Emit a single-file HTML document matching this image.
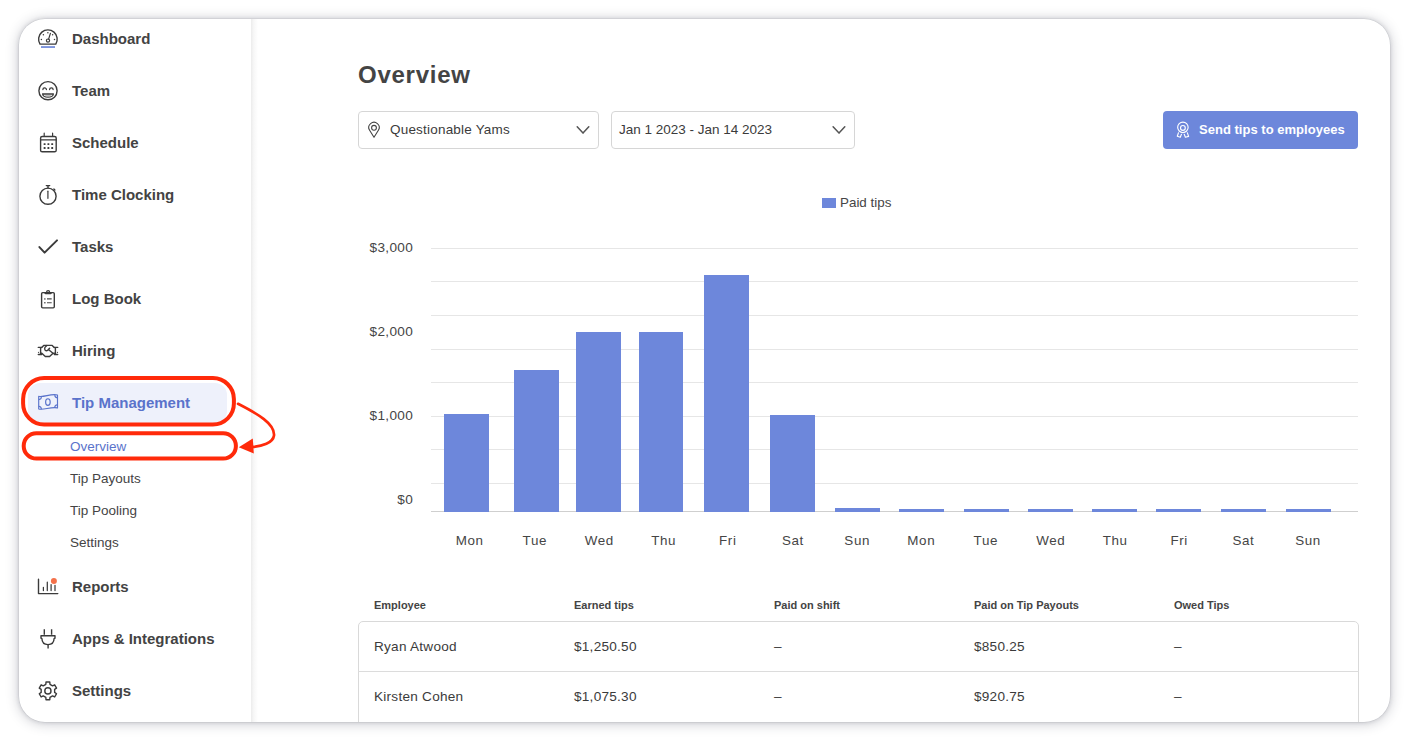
<!DOCTYPE html><html><head><meta charset="utf-8"><style>
*{box-sizing:border-box;margin:0;padding:0}
html,body{width:1409px;height:741px;overflow:hidden;background:#fff;font-family:"Liberation Sans",sans-serif;color:#3b3b3b}
#win{position:absolute;left:19px;top:19px;width:1371px;height:703px;border-radius:26px;overflow:hidden;background:#fff;
 box-shadow:0 0 0 0.5px rgba(60,64,80,0.10),0 0 4px rgba(40,44,64,0.14),0 1px 13px rgba(40,44,64,0.28)}
#page{position:absolute;left:-19px;top:-19px;width:1409px;height:741px}
.a{position:absolute;white-space:nowrap;line-height:20px;height:20px}
.nav{font-size:15px;font-weight:bold;color:#434343;left:72px}
.sub{font-size:13.5px;color:#444;left:70px}
.dd{position:absolute;top:111px;height:38px;border:1px solid #d6d6d6;border-radius:4px;background:#fff}
.yl{font-size:13.6px;color:#454545;width:60px;text-align:right;left:353px;letter-spacing:0.3px}
.xl{font-size:13.4px;color:#454545;width:60px;text-align:center;letter-spacing:0.6px;text-indent:0.6px}
.th{font-size:11px;font-weight:bold;color:#444}
.td{font-size:13.6px;color:#3b3b3b;letter-spacing:0.25px}
.bar{position:absolute;background:#6d87db}
.gl{position:absolute;left:431px;width:927px;height:1px;background:#e6e6e6}
</style></head><body><div id="win"><div id="page"><div style="position:absolute;left:251px;top:0;width:7px;height:741px;background:linear-gradient(to right,#ececec,#f7f7f7 40%,#fff)"></div>
<div style="position:absolute;left:28px;top:383px;width:199px;height:40px;border-radius:12px;background:#eef1fb"></div>
<div class="a nav" style="left:72px;top:29px;">Dashboard</div>
<div class="a nav" style="left:72px;top:81px;">Team</div>
<div class="a nav" style="left:72px;top:133px;">Schedule</div>
<div class="a nav" style="left:72px;top:185px;">Time Clocking</div>
<div class="a nav" style="left:72px;top:237px;">Tasks</div>
<div class="a nav" style="left:72px;top:289px;">Log Book</div>
<div class="a nav" style="left:72px;top:341px;">Hiring</div>
<div class="a nav" style="left:72px;top:393px;color:#5a73cb">Tip Management</div>
<div class="a nav" style="left:72px;top:577px;">Reports</div>
<div class="a nav" style="left:72px;top:629px;">Apps &amp; Integrations</div>
<div class="a nav" style="left:72px;top:681px;">Settings</div>
<div class="a sub" style="left:70px;top:437px;color:#5a73cb">Overview</div>
<div class="a sub" style="left:70px;top:469px;">Tip Payouts</div>
<div class="a sub" style="left:70px;top:501px;">Tip Pooling</div>
<div class="a sub" style="left:70px;top:533px;">Settings</div>
<div class="a " style="left:358px;top:65px;font-size:24px;font-weight:bold;color:#444;letter-spacing:0.75px">Overview</div>
<div class="dd" style="left:358px;width:241px"></div>
<div class="dd" style="left:611px;width:244px"></div>
<div class="a " style="left:390px;top:120px;font-size:13.5px;color:#3b3b3b;letter-spacing:0.2px">Questionable Yams</div>
<div class="a " style="left:619px;top:120px;font-size:13.5px;color:#3b3b3b;letter-spacing:0px">Jan 1 2023 - Jan 14 2023</div>
<div style="position:absolute;left:1163px;top:111px;width:195px;height:38px;border-radius:4px;background:#6d87db"></div>
<div class="a " style="left:1199px;top:120px;font-size:13px;font-weight:bold;color:#fff;letter-spacing:0.02px">Send tips to employees</div>
<div style="position:absolute;left:822px;top:198px;width:14px;height:10px;background:#6d87db"></div>
<div class="a " style="left:840px;top:193px;font-size:13.4px;color:#454545">Paid tips</div>
<div class="gl" style="top:248px"></div>
<div class="gl" style="top:281px"></div>
<div class="gl" style="top:315px"></div>
<div class="gl" style="top:349px"></div>
<div class="gl" style="top:382px"></div>
<div class="gl" style="top:416px"></div>
<div class="gl" style="top:449px"></div>
<div class="gl" style="top:483px"></div>
<div class="gl" style="top:511px;background:#cfcfcf"></div>
<div class="a yl" style="left:353px;top:238px;">$3,000</div>
<div class="a yl" style="left:353px;top:322px;">$2,000</div>
<div class="a yl" style="left:353px;top:406px;">$1,000</div>
<div class="a yl" style="left:353px;top:490px;">$0</div>
<div class="bar" style="left:444px;top:414px;width:45px;height:98px"></div>
<div class="bar" style="left:514px;top:370px;width:45px;height:142px"></div>
<div class="bar" style="left:576px;top:332px;width:45px;height:180px"></div>
<div class="bar" style="left:639px;top:332px;width:44px;height:180px"></div>
<div class="bar" style="left:704px;top:275px;width:45px;height:237px"></div>
<div class="bar" style="left:770px;top:415px;width:45px;height:97px"></div>
<div class="bar" style="left:835px;top:508px;width:45px;height:4px"></div>
<div class="bar" style="left:899px;top:509px;width:45px;height:3px"></div>
<div class="bar" style="left:964px;top:509px;width:45px;height:3px"></div>
<div class="bar" style="left:1028px;top:509px;width:45px;height:3px"></div>
<div class="bar" style="left:1092px;top:509px;width:45px;height:3px"></div>
<div class="bar" style="left:1156px;top:509px;width:45px;height:3px"></div>
<div class="bar" style="left:1221px;top:509px;width:45px;height:3px"></div>
<div class="bar" style="left:1286px;top:509px;width:45px;height:3px"></div>
<div class="a xl" style="left:439.3px;top:531px;">Mon</div>
<div class="a xl" style="left:504.5px;top:531px;">Tue</div>
<div class="a xl" style="left:568.9px;top:531px;">Wed</div>
<div class="a xl" style="left:633.3px;top:531px;">Thu</div>
<div class="a xl" style="left:697.5px;top:531px;">Fri</div>
<div class="a xl" style="left:762.6px;top:531px;">Sat</div>
<div class="a xl" style="left:826.9px;top:531px;">Sun</div>
<div class="a xl" style="left:891px;top:531px;">Mon</div>
<div class="a xl" style="left:955.5px;top:531px;">Tue</div>
<div class="a xl" style="left:1020.5px;top:531px;">Wed</div>
<div class="a xl" style="left:1084.9px;top:531px;">Thu</div>
<div class="a xl" style="left:1148.9px;top:531px;">Fri</div>
<div class="a xl" style="left:1213.1px;top:531px;">Sat</div>
<div class="a xl" style="left:1277.8px;top:531px;">Sun</div>
<div class="a th" style="left:374px;top:595px;">Employee</div>
<div class="a th" style="left:574px;top:595px;">Earned tips</div>
<div class="a th" style="left:774px;top:595px;">Paid on shift</div>
<div class="a th" style="left:974px;top:595px;">Paid on Tip Payouts</div>
<div class="a th" style="left:1174px;top:595px;">Owed Tips</div>
<div style="position:absolute;left:358px;top:621px;width:1001px;height:200px;border:1px solid #d9d9d9;border-radius:5px"></div>
<div style="position:absolute;left:358px;top:671px;width:1001px;height:1px;background:#dcdcdc"></div>
<div class="a td" style="left:374px;top:637px;">Ryan Atwood</div>
<div class="a td" style="left:574px;top:637px;">$1,250.50</div>
<div class="a td" style="left:774px;top:637px;">&ndash;</div>
<div class="a td" style="left:974px;top:637px;">$850.25</div>
<div class="a td" style="left:1174px;top:637px;">&ndash;</div>
<div class="a td" style="left:374px;top:687px;">Kirsten Cohen</div>
<div class="a td" style="left:574px;top:687px;">$1,075.30</div>
<div class="a td" style="left:774px;top:687px;">&ndash;</div>
<div class="a td" style="left:974px;top:687px;">$920.75</div>
<div class="a td" style="left:1174px;top:687px;">&ndash;</div><svg style="position:absolute;left:0;top:0" width="1409" height="741" viewBox="0 0 1409 741"><g fill="none" stroke="#3b3b3b" stroke-width="1.4" stroke-linecap="round" stroke-linejoin="round"><path d="M40 44.1 A9.3 9.3 0 1 1 55.8 44.1 Z"/><circle cx="48" cy="40.6" r="1.6" stroke-width="1.2"/><path d="M48.6 39.1 L50.4 33.4" stroke-width="1.2"/></g><g fill="#3b3b3b"><circle cx="41.4" cy="39.5" r="0.75"/><circle cx="43.4" cy="34.8" r="0.75"/><circle cx="47.9" cy="32.8" r="0.75"/><circle cx="52.6" cy="34.8" r="0.75"/><circle cx="54.5" cy="39.5" r="0.75"/></g><rect x="41" y="46.1" width="14" height="1.9" fill="#7c93dc"/><g fill="none" stroke="#3b3b3b" stroke-width="1.4" stroke-linecap="round" stroke-linejoin="round"><circle cx="48" cy="90.7" r="9.1"/><path d="M42.9 89.6 A1.75 1.75 0 0 1 46.4 89.6 M49.6 89.6 A1.75 1.75 0 0 1 53.1 89.6" stroke-width="1.3"/><path d="M42.6 94 L53.4 94 C53 96.4 50.6 97.2 48 97.2 C45.4 97.2 43 96.4 42.6 94 Z" stroke-width="1.3"/></g><path d="M44.6 95.3 L51.4 95.3 C50.8 96.1 49.5 96.4 48 96.4 C46.5 96.4 45.2 96.1 44.6 95.3 Z" fill="#aaa"/><g fill="none" stroke="#3b3b3b" stroke-width="1.4" stroke-linecap="round" stroke-linejoin="round"><rect x="40.6" y="136.5" width="15.6" height="15.3" rx="1.6"/><path d="M40.6 139.9 L56.2 139.9" stroke-width="1.2"/><path d="M44.2 133.2 L44.2 136.2 M52.6 133.2 L52.6 136.2" stroke-width="1.2"/></g><g fill="#3b3b3b"><rect x="43.65" y="143.15" width="1.9" height="1.9" rx="0.3"/><rect x="43.65" y="147.05" width="1.9" height="1.9" rx="0.3"/><rect x="47.449999999999996" y="143.15" width="1.9" height="1.9" rx="0.3"/><rect x="47.449999999999996" y="147.05" width="1.9" height="1.9" rx="0.3"/><rect x="51.25" y="143.15" width="1.9" height="1.9" rx="0.3"/><rect x="51.25" y="147.05" width="1.9" height="1.9" rx="0.3"/></g><g fill="none" stroke="#3b3b3b" stroke-width="1.4" stroke-linecap="round" stroke-linejoin="round"><circle cx="48" cy="196.2" r="8.1"/><path d="M46.3 185.6 L49.7 185.6 M48 185.8 L48 188" /><path d="M53.9 189.0 L54.9 190.0" stroke-width="1.3"/><path d="M47.9 191.3 L47.9 198.3" stroke-width="1.4" stroke="#555"/></g><path d="M39.4 247.1 L44.6 252.6 L57 240.4" fill="none" stroke="#3b3b3b" stroke-width="2" stroke-linecap="round" stroke-linejoin="round"/><g fill="none" stroke="#3b3b3b" stroke-width="1.4" stroke-linecap="round" stroke-linejoin="round"><rect x="41.6" y="292.6" width="12.7" height="15.3" rx="1.1"/><path d="M46.6 292.2 A1.5 1.5 0 0 1 49.6 292.2" stroke-width="1.3"/></g><path d="M44.4 292.4 L51.8 292.4 L51.8 293.2 Q51.6 294.2 50.6 294.2 L45.6 294.2 Q44.6 294.2 44.4 293.2 Z" fill="#3b3b3b"/><g fill="#3b3b3b"><rect x="44.2" y="298.3" width="1.3" height="1.3"/><rect x="44.2" y="302.1" width="1.3" height="1.3"/></g><g stroke="#4a4a4a" stroke-width="1.2"><path d="M47 298.95 L51.7 298.95 M47 302.75 L51.7 302.75"/></g><g fill="none" stroke="#3b3b3b" stroke-width="1.4" stroke-linecap="round" stroke-linejoin="round" stroke-width="1.1"><path d="M38.3 347.4 L41.7 347.4 M40.6 347.4 L40.6 354.5 M38.3 354.5 L41.7 354.5 M54.3 347.4 L57.7 347.4 M55.4 347.4 L55.4 354.5 M54.3 354.5 L57.7 354.5"/><path d="M41.7 347.4 L43.7 345.4 L52.2 345.4 L54.2 347.4"/><path d="M40.8 353.2 L41.8 353.2 L45.3 356.5 L49.6 356.5 L52.8 353.4 L54.6 353.2"/><path d="M46.9 345.6 L45 347.3 Q44.2 349.2 45.2 350.3 Q46.4 351.4 47.8 350.2 L49.6 348.3"/><path d="M48.4 349.5 L53 353.2"/></g><g fill="#3b3b3b"><circle cx="38.5" cy="352.3" r="0.6"/><circle cx="57.5" cy="352.3" r="0.6"/></g><g fill="none" stroke="#5a73cb" stroke-width="1.15" stroke-linejoin="round"><path d="M38.7 396.3 C44 397.6 50.5 393.4 57.5 395 L57.5 407.9 C50.5 406.4 44 410.4 38.7 409 Z"/><path d="M38.7 399.6 A3 3 0 0 0 41.4 396.7 M54.7 395.1 A3 3 0 0 0 57.5 397.8 M38.7 406.3 A3 3 0 0 1 41.4 409.2 M54.7 407.8 A3 3 0 0 1 57.5 404.7"/><ellipse cx="47.9" cy="402" rx="2.3" ry="3.3"/></g><g fill="none" stroke="#3b3b3b" stroke-width="1.4" stroke-linecap="round" stroke-linejoin="round" stroke-linecap="butt"><path d="M38.5 579.3 L38.5 593.6 L57.8 593.6"/><path d="M43.4 587.3 L43.4 590.6 M47.3 582.2 L47.3 590.6 M51.1 584.6 L51.1 590.6 M55 585.3 L55 590.6" stroke-width="1.25"/></g><circle cx="53.9" cy="580.9" r="3" fill="#f4714a"/><g fill="none" stroke="#3b3b3b" stroke-width="1.4" stroke-linecap="round" stroke-linejoin="round"><path d="M44.3 629.2 L44.3 634.8 M51.6 629.2 L51.6 634.8" stroke-linecap="butt"/><path d="M41 638.2 L41 635.8 L55 635.8 L55 638.2 L54.1 638.6 C54 642.6 51.2 644.6 48 644.6 C44.8 644.6 42 642.6 41.9 638.6 Z"/><path d="M48.1 644.8 L48.1 648.6" stroke-linecap="butt"/></g><g fill="none" stroke="#3b3b3b" stroke-width="1.4" stroke-linecap="round" stroke-linejoin="round" stroke-width="1.35"><path d="M45.84 684.32 L46.01 682.00 L49.79 682.00 L49.96 684.32 L52.57 685.82 L54.66 684.81 L56.55 688.09 L54.63 689.39 L54.63 692.41 L56.55 693.71 L54.66 696.99 L52.57 695.98 L49.96 697.48 L49.79 699.80 L46.01 699.80 L45.84 697.48 L43.23 695.98 L41.14 696.99 L39.25 693.71 L41.17 692.41 L41.17 689.39 L39.25 688.09 L41.14 684.81 L43.23 685.82 Z"/><circle cx="47.9" cy="690.9" r="3.1"/></g><g fill="none" stroke="#444" stroke-width="1.1"><path d="M374 137.3 L369.6 130.3 A5.2 5.2 0 1 1 378.4 130.3 Z" stroke-linejoin="round"/><circle cx="374" cy="127.8" r="2.4"/></g><g fill="none" stroke="#555" stroke-width="1.5" stroke-linecap="round" stroke-linejoin="round"><path d="M577.2 126.8 L583 133.1 L588.8 126.8"/><path d="M833.1 126.8 L839 133.1 L844.8 126.8"/></g><g fill="none" stroke="#fff" stroke-width="1.15" stroke-linejoin="round"><circle cx="1182.9" cy="127.3" r="5.25"/><circle cx="1182.9" cy="127.9" r="2.4"/><path d="M1178.6 132.4 L1177.3 136.2 L1180.3 137.2 L1181.6 133.9 M1187.2 132.4 L1188.6 136.4 L1185.4 137.2 L1184.1 133.9"/></g><rect x="23.1" y="378.1" width="210.8" height="46.4" rx="21" fill="none" stroke="#ff2a0a" stroke-width="4"/><rect x="23.7" y="433.2" width="212.2" height="25.4" rx="12.7" fill="none" stroke="#ff2a0a" stroke-width="4"/><path d="M238 403.8 C258 414, 275 424, 274 435.5 C273 443, 262 446.4, 252 447" fill="none" stroke="#ff2a0a" stroke-width="2.7" stroke-linecap="round"/><path d="M238.8 447.2 L252.8 438.4 L253.8 453.4 Z" fill="#ff2a0a"/></svg></div></div></body></html>
